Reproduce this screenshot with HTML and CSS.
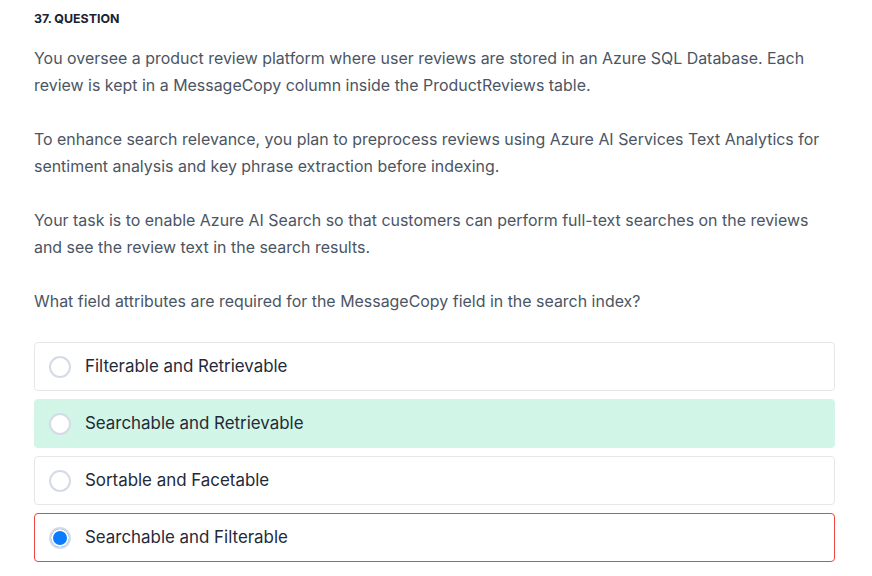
FILE: index.html
```html
<!DOCTYPE html>
<html>
<head>
<meta charset="utf-8">
<link rel="stylesheet" href="styles.css">
</head>
<body>
<div class="question">
  <div class="q-label">37. QUESTION</div>
  <div class="q-text">
    <p>You oversee a product review platform where user reviews are stored in an Azure SQL Database. Each review is kept in a MessageCopy column inside the ProductReviews table.</p>
    <p>To enhance search relevance, you plan to preprocess reviews using Azure AI Services Text Analytics for sentiment analysis and key phrase extraction before indexing.</p>
    <p>Your task is to enable Azure AI Search so that customers can perform full-text searches on the reviews and see the review text in the search results.</p>
    <p>What field attributes are required for the MessageCopy field in the search index?</p>
  </div>
  <div class="options">
    <div class="option"><span class="radio"></span><span class="opt-text">Filterable and Retrievable</span></div>
    <div class="option correct"><span class="radio"></span><span class="opt-text">Searchable and Retrievable</span></div>
    <div class="option"><span class="radio"></span><span class="opt-text">Sortable and Facetable</span></div>
    <div class="option wrong"><span class="radio checked"></span><span class="opt-text">Searchable and Filterable</span></div>
  </div>
</div>
</body>
</html>
```
FILE: styles.css
```css
html, body {
  margin: 0;
  padding: 0;
  background: #ffffff;
}
body {
  font-family: Inter, "Noto Sans", sans-serif;
}
.question {
  width: 801px;
  padding: 12px 0 0 34px;
}
.q-label {
  font-size: 12.4px;
  font-weight: 700;
  color: #1a2233;
  line-height: 14px;
}
.q-text {
  margin-top: 19px;
  padding-right: 10px;
  color: #4b5563;
  font-size: 15.95px;
  line-height: 27px;
}
.q-text p {
  margin: 0 0 27px 0;
}
.q-text p:last-child {
  margin-bottom: 0;
}
.options {
  margin-top: 27px;
  display: flex;
  flex-direction: column;
  gap: 8px;
}
.option {
  height: 47px;
  border: 1px solid #e5e7eb;
  border-radius: 4px;
  display: flex;
  align-items: center;
  padding-left: 14px;
  gap: 14px;
  box-sizing: content-box;
}
.option.correct {
  background: #d1f5e6;
  border-color: #d1f5e6;
}
.option.wrong {
  border-color: #ef4444;
}
.radio {
  width: 18px;
  height: 18px;
  border: 2px solid #d5dbe6;
  border-radius: 50%;
  background: #fff;
  box-sizing: content-box;
  flex: none;
}
.radio.checked {
  background: #0a7cff;
  box-shadow: inset 0 0 0 2px #fff;
}
.opt-text {
  font-size: 16.9px;
  color: #1f2a3a;
  padding-bottom: 2px;
}
```
